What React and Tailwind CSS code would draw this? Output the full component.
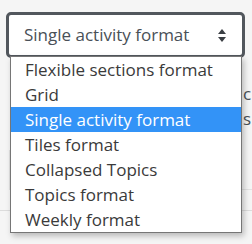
export default function App() {
  const options = [
    'Flexible sections format',
    'Grid',
    'Single activity format',
    'Tiles format',
    'Collapsed Topics',
    'Topics format',
    'Weekly format',
  ];
  const selected = 'Single activity format';

  return (
    <div className="relative w-[252px] h-[244px] overflow-hidden bg-[#f5f5f5] font-['Open_Sans',sans-serif]">
      {/* select */}
      <div className="pt-[12px] pl-[6px]">
        <div className="w-[239px] h-[46px] rounded-[5px] border-[3px] border-[#52575d] bg-white flex items-center justify-between pl-[15px] pr-[16px] text-[#495057] text-[17px]">
          <span>{selected}</span>
          <svg width="8" height="13" viewBox="0 0 8 13">
            <path d="M4 0 L8 5 L0 5 Z" fill="#3b3f44" />
            <path d="M0 8 L8 8 L4 13 Z" fill="#3b3f44" />
          </svg>
        </div>
      </div>

      {/* page content behind the menu */}
      <div className="text-[#495057] text-[17px] leading-[25px] whitespace-nowrap">
        <div className="h-[23px]" />
        <div className="pl-[243px]">c</div>
        <div className="pl-[243px]">s</div>
        <div className="mt-[19px] ml-[9px] h-[40px] border-l border-b border-[#e2e2e2]" />
        <div className="mt-[20px] h-px bg-[#dcdcdc]" />
      </div>

      {/* open dropdown */}
      <ul className="absolute left-[10px] top-[56px] w-[232px] h-[177px] border border-[#767676] bg-white shadow-[2px_3px_6px_rgba(0,0,0,0.25)] text-[17px] text-[#3a3a3a]">
        {options.map((o) => (
          <li
            key={o}
            className={
              o === selected
                ? 'h-[25px] leading-[25px] pl-[14px] bg-[#3393f7] text-white'
                : 'h-[25px] leading-[25px] pl-[14px]'
            }
          >
            {o}
          </li>
        ))}
      </ul>
    </div>
  );
}
